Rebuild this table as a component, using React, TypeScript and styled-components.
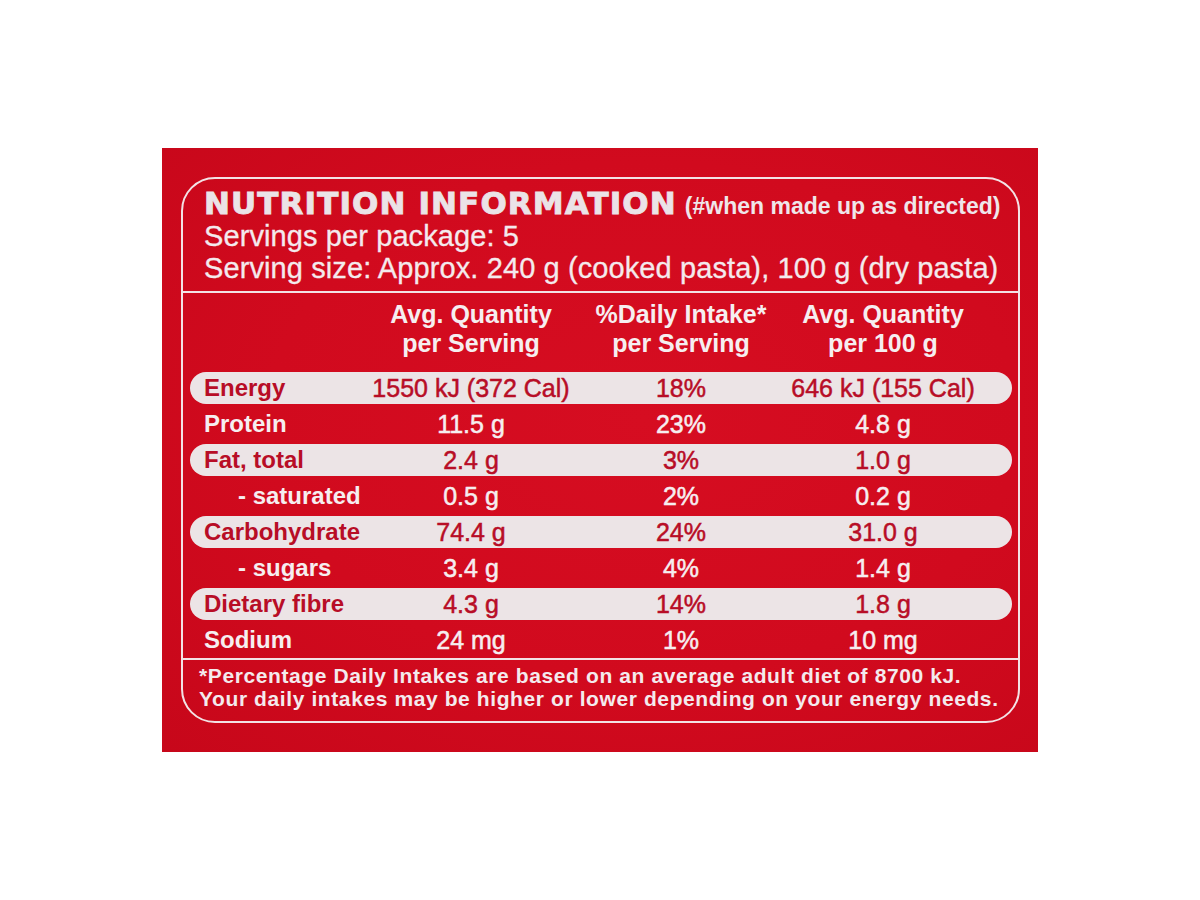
import React from "react";
import styled, { createGlobalStyle } from "styled-components";

const GlobalStyle = createGlobalStyle`
  html, body { margin: 0; padding: 0; background: #ffffff; }
  body { font-family: "Liberation Sans", Arial, sans-serif; }
`;

const Page = styled.div`
  width: 1200px;
  height: 900px;
  display: flex;
  align-items: center;
  justify-content: center;
`;

const Panel = styled.section`
  width: 876px;
  height: 604px;
  box-sizing: border-box;
  padding: 29px 18px 29px 19px;
  background: radial-gradient(ellipse at 55% 45%, #d60d21 0%, #d10a1e 55%, #c7071a 100%);
  display: flex;
`;

const Box = styled.div`
  flex: 1;
  min-width: 0;
  border: 2px solid #f3e2e5;
  border-radius: 34px;
  display: flex;
  flex-direction: column;
  color: #f6eef0;
`;

const Header = styled.header`
  padding: 7px 16px 7px 21px;
  border-bottom: 2px solid #f3e2e5;
`;

const TitleRow = styled.div`
  display: flex;
  align-items: baseline;
  gap: 8px;
  height: 34px;
  line-height: 34px;
  white-space: nowrap;
`;

const Title = styled.h1`
  margin: 0;
  font-family: "DejaVu Sans", "Liberation Sans", sans-serif;
  font-weight: 700;
  font-size: 31px;
  letter-spacing: 1.1px;
  -webkit-text-stroke: 0.9px #ebe3e7;
  color: #ebe3e7;
`;

const Subtitle = styled.span`
  font-family: "Liberation Sans", Arial, sans-serif;
  font-weight: 700;
  font-size: 23px;
  color: #efe6ea;
`;

const InfoLine = styled.p`
  margin: 0;
  font-size: 29px;
  line-height: 32px;
  white-space: nowrap;
  letter-spacing: 0.1px;
  -webkit-text-stroke: 0.3px #f4eaed;
  color: #f4eaed;
`;

const Table = styled.div`
  display: flex;
  flex-direction: column;
  padding-top: 7px;
  border-bottom: 2px solid #f3e2e5;
`;

const Grid = styled.div`
  display: grid;
  grid-template-columns: 181px 200px 220px 184px 1fr;
  align-items: center;
  margin: 0 6px 0 7px;
  white-space: nowrap;
`;

const HeadRow = styled(Grid)`
  margin-bottom: 12px;
`;

const HeadCell = styled.div`
  text-align: center;
  font-weight: 700;
  font-size: 25px;
  line-height: 29px;
  color: #f6eef0;
`;

const Row = styled(Grid)<{ $shaded?: boolean }>`
  height: 32px;
  margin-top: 2px;
  margin-bottom: 2px;
  border-radius: 16px;
  background: ${(p) => (p.$shaded ? "#ece4e6" : "transparent")};
  color: ${(p) => (p.$shaded ? "#b80d26" : "#f6eef0")};
`;

const Label = styled.div<{ $indent?: boolean }>`
  padding-left: ${(p) => (p.$indent ? "48px" : "14px")};
  font-weight: 700;
  font-size: 24px;
  line-height: 32px;
`;

const Value = styled.div`
  text-align: center;
  font-size: 25px;
  line-height: 32px;
  -webkit-text-stroke: 0.5px currentColor;
`;

const Footer = styled.footer`
  padding: 4px 10px 11px 16px;
  font-weight: 700;
  font-size: 21px;
  line-height: 23px;
  letter-spacing: 0.6px;
  color: #f4eaed;
  white-space: nowrap;
`;

const FootLine = styled.div``;

type Nutrient = {
  label: string;
  serve: string;
  di: string;
  per100: string;
  shaded?: boolean;
  indent?: boolean;
};

const rows: Nutrient[] = [
  { label: "Energy", serve: "1550 kJ (372 Cal)", di: "18%", per100: "646 kJ (155 Cal)", shaded: true },
  { label: "Protein", serve: "11.5 g", di: "23%", per100: "4.8 g" },
  { label: "Fat, total", serve: "2.4 g", di: "3%", per100: "1.0 g", shaded: true },
  { label: "- saturated", serve: "0.5 g", di: "2%", per100: "0.2 g", indent: true },
  { label: "Carbohydrate", serve: "74.4 g", di: "24%", per100: "31.0 g", shaded: true },
  { label: "- sugars", serve: "3.4 g", di: "4%", per100: "1.4 g", indent: true },
  { label: "Dietary fibre", serve: "4.3 g", di: "14%", per100: "1.8 g", shaded: true },
  { label: "Sodium", serve: "24 mg", di: "1%", per100: "10 mg" },
];

export default function App() {
  return (
    <>
      <GlobalStyle />
      <Page>
        <Panel>
          <Box>
            <Header>
              <TitleRow>
                <Title>NUTRITION INFORMATION</Title>
                <Subtitle>(#when made up as directed)</Subtitle>
              </TitleRow>
              <InfoLine>Servings per package: 5</InfoLine>
              <InfoLine>Serving size: Approx. 240 g (cooked pasta), 100 g (dry pasta)</InfoLine>
            </Header>
            <Table>
              <HeadRow>
                <div />
                <HeadCell>
                  Avg. Quantity
                  <br />
                  per Serving
                </HeadCell>
                <HeadCell>
                  %Daily Intake*
                  <br />
                  per Serving
                </HeadCell>
                <HeadCell>
                  Avg. Quantity
                  <br />
                  per 100 g
                </HeadCell>
              </HeadRow>
              {rows.map((r) => (
                <Row key={r.label} $shaded={r.shaded}>
                  <Label $indent={r.indent}>{r.label}</Label>
                  <Value>{r.serve}</Value>
                  <Value>{r.di}</Value>
                  <Value>{r.per100}</Value>
                </Row>
              ))}
            </Table>
            <Footer>
              <FootLine>*Percentage Daily Intakes are based on an average adult diet of 8700 kJ.</FootLine>
              <FootLine>Your daily intakes may be higher or lower depending on your energy needs.</FootLine>
            </Footer>
          </Box>
        </Panel>
      </Page>
    </>
  );
}
